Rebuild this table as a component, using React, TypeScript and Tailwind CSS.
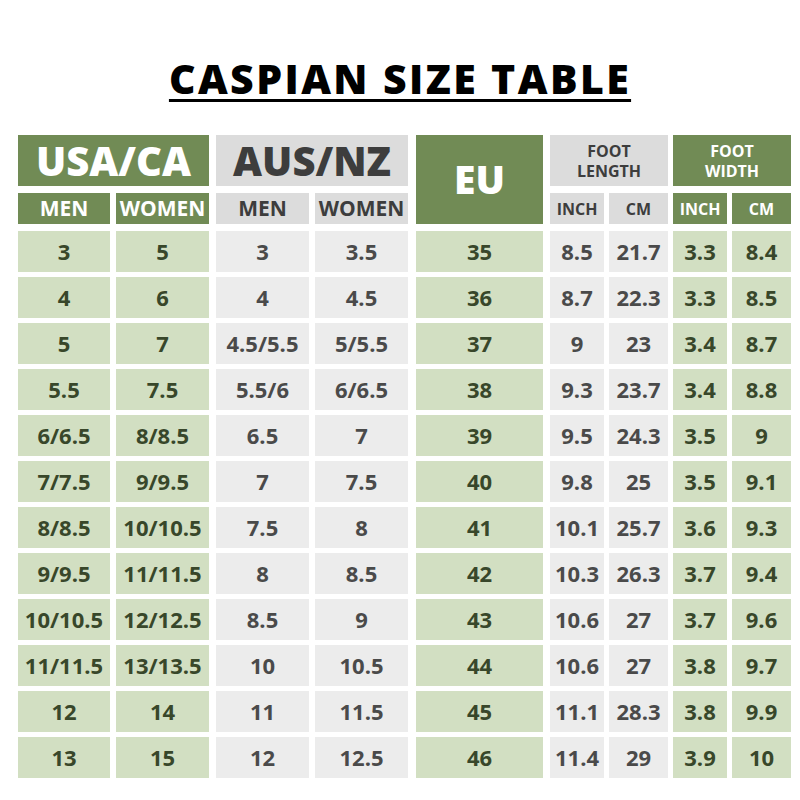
const usa = [
  ['3', '5'], ['4', '6'], ['5', '7'], ['5.5', '7.5'], ['6/6.5', '8/8.5'], ['7/7.5', '9/9.5'],
  ['8/8.5', '10/10.5'], ['9/9.5', '11/11.5'], ['10/10.5', '12/12.5'], ['11/11.5', '13/13.5'], ['12', '14'], ['13', '15'],
];
const aus = [
  ['3', '3.5'], ['4', '4.5'], ['4.5/5.5', '5/5.5'], ['5.5/6', '6/6.5'], ['6.5', '7'], ['7', '7.5'],
  ['7.5', '8'], ['8', '8.5'], ['8.5', '9'], ['10', '10.5'], ['11', '11.5'], ['12', '12.5'],
];
const eu = ['35', '36', '37', '38', '39', '40', '41', '42', '43', '44', '45', '46'];
const length = [
  ['8.5', '21.7'], ['8.7', '22.3'], ['9', '23'], ['9.3', '23.7'], ['9.5', '24.3'], ['9.8', '25'],
  ['10.1', '25.7'], ['10.3', '26.3'], ['10.6', '27'], ['10.6', '27'], ['11.1', '28.3'], ['11.4', '29'],
];
const width = [
  ['3.3', '8.4'], ['3.3', '8.5'], ['3.4', '8.7'], ['3.4', '8.8'], ['3.5', '9'], ['3.5', '9.1'],
  ['3.6', '9.3'], ['3.7', '9.4'], ['3.7', '9.6'], ['3.8', '9.7'], ['3.8', '9.9'], ['3.9', '10'],
];

const green = 'bg-[#d2dfc2] text-[#38472a]';
const gray = 'bg-[#ececec] text-[#4a4a4a]';

const Cell = ({ value, className }: { value: string; className: string }) => (
  <div className={`flex h-[41px] items-center justify-center text-[22px] font-bold ${className}`}>
    {value}
  </div>
);

const PairGroup = ({
  title,
  subs,
  rows,
  widths,
  dark,
  small,
}: {
  title: string;
  subs: [string, string];
  rows: string[][];
  widths: [string, string];
  dark: boolean;
  small?: boolean;
}) => {
  const head = dark ? 'bg-[#718b55] text-white' : 'bg-[#dcdcdc] text-[#3d3d3d]';
  const cell = dark ? green : gray;
  const subText = small ? 'text-[16px]' : 'text-[21px]';
  return (
    <div className="flex flex-col">
      <div
        className={`flex h-[51px] items-center justify-center whitespace-pre-line text-center ${head} ${
          small ? 'text-[16px] leading-[20px] font-bold' : 'text-[40px] font-extrabold'
        }`}
      >
        {title}
      </div>
      <div className={`mt-[7px] flex ${small ? 'gap-[5px]' : 'gap-[6px]'}`}>
        <div className={`flex h-[31px] items-center justify-center ${widths[0]} ${head} ${subText} font-bold`}>
          {subs[0]}
        </div>
        <div className={`flex h-[31px] items-center justify-center ${widths[1]} ${head} ${subText} font-bold`}>
          {subs[1]}
        </div>
      </div>
      <div className="mt-[7px] flex flex-col gap-[5px]">
        {rows.map((r, i) => (
          <div key={i} className={`flex ${small ? 'gap-[5px]' : 'gap-[6px]'}`}>
            <Cell value={r[0]} className={`${widths[0]} ${cell}`} />
            <Cell value={r[1]} className={`${widths[1]} ${cell}`} />
          </div>
        ))}
      </div>
    </div>
  );
};

export default function App() {
  return (
    <div
      className="flex h-[800px] w-[800px] flex-col items-center bg-white"
      style={{ fontFamily: '"Open Sans", "Noto Sans", sans-serif' }}
    >
      <h1 className="mt-[55px] text-[41px] leading-[46px] font-black tracking-[2.4px] text-black underline decoration-[3px] underline-offset-[5px]">
        CASPIAN SIZE TABLE
      </h1>
      <div className="mt-[34px] flex w-full pl-[18px]">
        <PairGroup
          title="USA/CA"
          subs={['MEN', 'WOMEN']}
          rows={usa}
          widths={['w-[92px]', 'w-[93px]']}
          dark
        />
        <div className="ml-[7px]">
          <PairGroup
            title="AUS/NZ"
            subs={['MEN', 'WOMEN']}
            rows={aus}
            widths={['w-[93px]', 'w-[93px]']}
            dark={false}
          />
        </div>
        <div className="ml-[8px] flex w-[127px] flex-col">
          <div className="flex h-[89px] items-center justify-center bg-[#718b55] text-[39px] font-extrabold text-white">
            EU
          </div>
          <div className="mt-[7px] flex flex-col gap-[5px]">
            {eu.map((v) => (
              <Cell key={v} value={v} className={`w-[127px] ${green}`} />
            ))}
          </div>
        </div>
        <div className="ml-[7px]">
          <PairGroup
            title={'FOOT\nLENGTH'}
            subs={['INCH', 'CM']}
            rows={length}
            widths={['w-[54px]', 'w-[59px]']}
            dark={false}
            small
          />
        </div>
        <div className="ml-[5px]">
          <PairGroup
            title={'FOOT\nWIDTH'}
            subs={['INCH', 'CM']}
            rows={width}
            widths={['w-[54px]', 'w-[59px]']}
            dark
            small
          />
        </div>
      </div>
    </div>
  );
}
